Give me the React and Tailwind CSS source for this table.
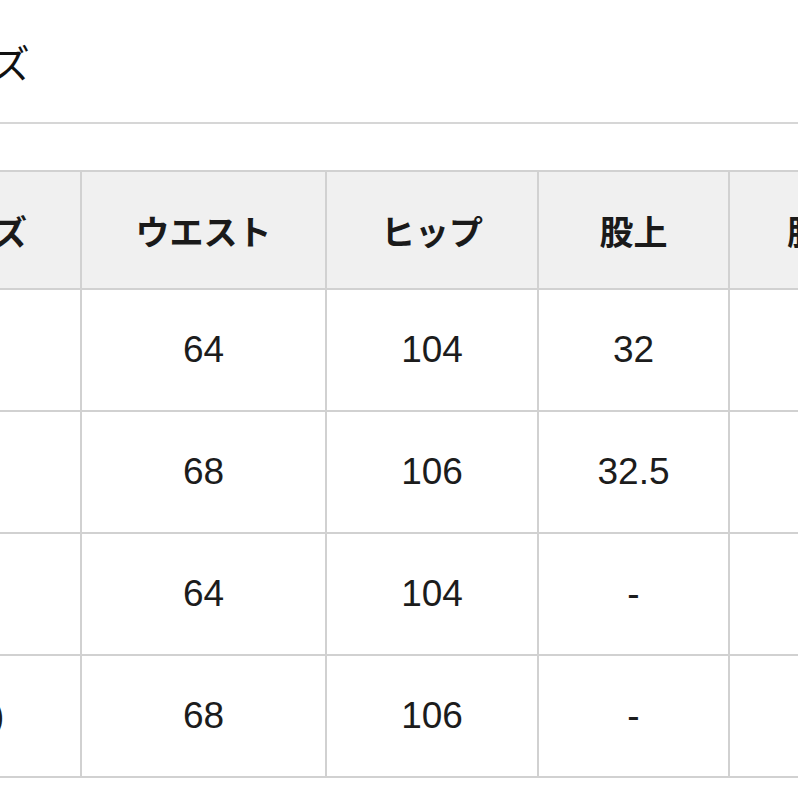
import React from "react";

const headers = ["サイズ", "ウエスト", "ヒップ", "股上", "股下"];
const rows = [
  ["S", "64", "104", "32", "70"],
  ["M", "68", "106", "32.5", "71"],
  ["S", "64", "104", "-", "72"],
  ["(M)", "68", "106", "-", "73"],
];

export default function App() {
  return (
    <div className="w-[798px] h-[798px] overflow-hidden bg-white">
      <div className="-ml-[129px] w-[1100px]">
        <div className="h-[122px] flex items-center pl-[43px]">
          <span
            className="text-[39px] leading-none text-[#111]"
            style={{ fontFamily: '"Noto Sans CJK JP", sans-serif' }}
          >
            サイズ
          </span>
        </div>
        <div className="h-[2px] bg-[#d6d6d6]" />
        <div className="h-[46px]" />
        <div className="grid grid-cols-[209px_245px_212px_191px_184px] w-max border-t-2 border-l-2 border-[#d1d1d1]">
          {headers.map((h) => (
            <div
              key={h}
              className="h-[118px] flex items-center justify-center bg-[#f0f0f0] border-r-2 border-b-2 border-[#d1d1d1] text-[34px] font-bold text-[#1a1a1a]"
              style={{ fontFamily: '"Noto Sans CJK JP", sans-serif' }}
            >
              {h}
            </div>
          ))}
          {rows.map((r, i) =>
            r.map((c, j) => (
              <div
                key={i + "-" + j}
                className="h-[122px] flex items-center justify-center bg-white border-r-2 border-b-2 border-[#d1d1d1] text-[37px] text-[#1c1c1c]"
                style={{ fontFamily: '"Liberation Sans", Arial, sans-serif' }}
              >
                {c}
              </div>
            ))
          )}
        </div>
      </div>
    </div>
  );
}
